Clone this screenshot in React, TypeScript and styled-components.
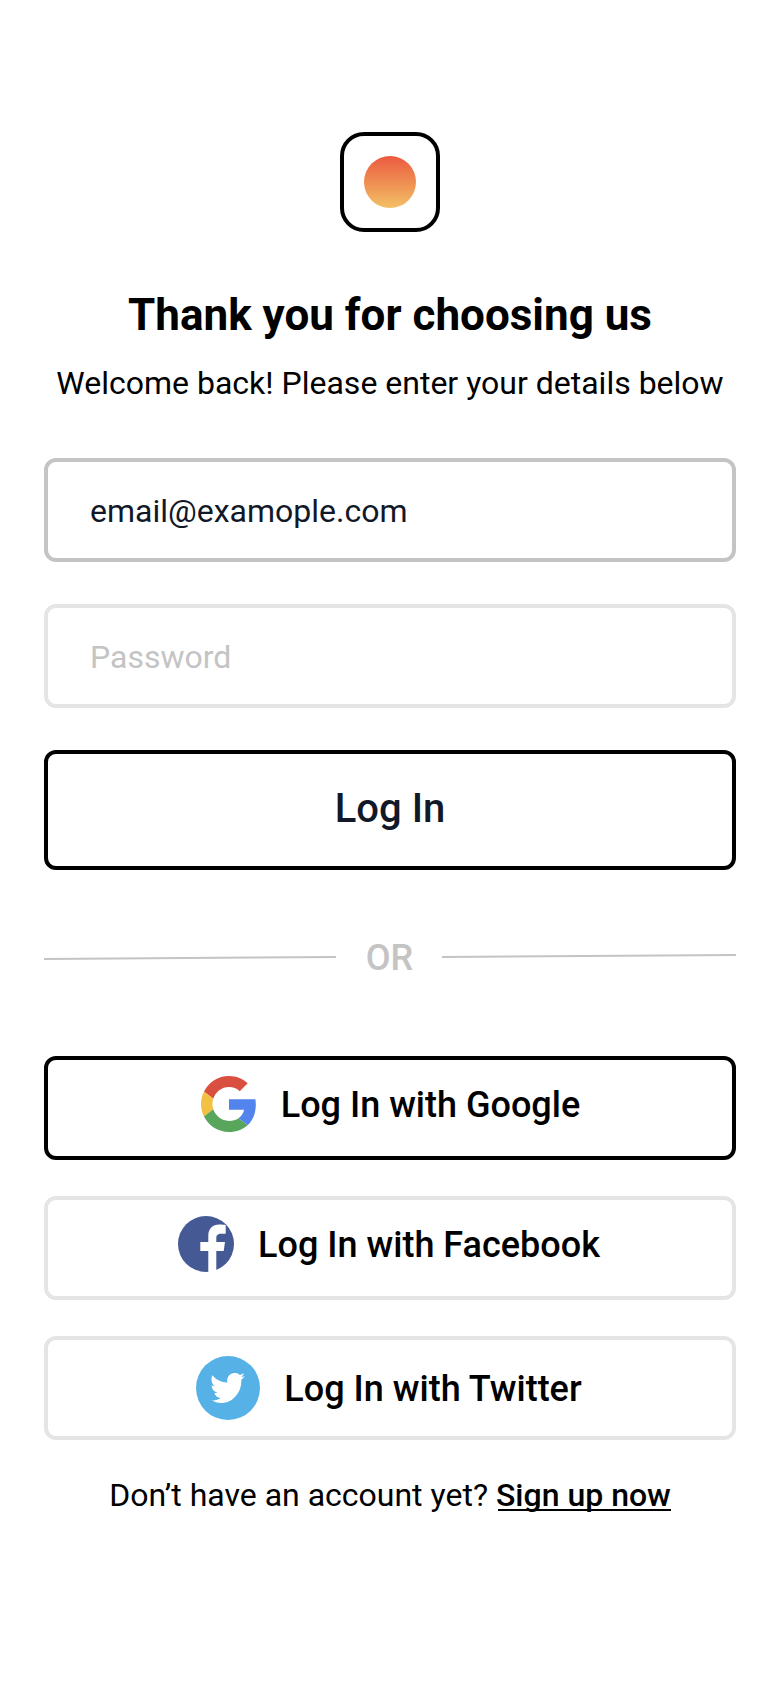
import React from "react";
import styled, { createGlobalStyle } from "styled-components";

const GlobalStyle = createGlobalStyle`
  * { box-sizing: border-box; }
  body {
    margin: 0;
    background: #fff;
    color: #000;
    font-family: Roboto, "Liberation Sans", sans-serif;
  }
`;

const Screen = styled.main`
  width: 780px;
  height: 1688px;
  padding: 132px 44px 0;
  display: flex;
  flex-direction: column;
  align-items: center;
  background: #fff;
`;

const Logo = styled.div`
  width: 100px;
  height: 100px;
  border: 4px solid #000;
  border-radius: 24px;
  padding: 20px;
`;

const Sun = styled.div`
  width: 52px;
  height: 52px;
  border-radius: 50%;
  background: linear-gradient(#eb5a3f, #f3c065);
`;

const Title = styled.h1`
  margin: 57px 0 0;
  font-size: 44px;
  line-height: 52px;
  font-weight: 700;
  white-space: nowrap;
`;

const Subtitle = styled.p`
  margin: 23px 0 0;
  font-size: 32px;
  line-height: 38px;
  white-space: nowrap;
`;

const Form = styled.form`
  width: 100%;
  margin-top: 56px;
  display: flex;
  flex-direction: column;
  gap: 42px;
`;

const Field = styled.input<{ $active?: boolean }>`
  width: 100%;
  height: 104px;
  padding: 2px 42px 0;
  border: 4px solid ${(p) => (p.$active ? "#c4c4c4" : "#e5e5e5")};
  border-radius: 12px;
  background: #fff;
  color: #111827;
  font: 400 32px/38px Roboto, "Liberation Sans", sans-serif;
  outline: none;

  &::placeholder {
    color: #c4c4c4;
    opacity: 1;
  }
`;

const LoginButton = styled.button`
  width: 100%;
  height: 120px;
  padding: 0 0 2px;
  border: 4px solid #000;
  border-radius: 12px;
  background: #fff;
  color: #111827;
  font: 500 40px/48px Roboto, "Liberation Sans", sans-serif;
`;

const Divider = styled.div`
  width: 100%;
  height: 42px;
  margin-top: 67px;
  display: grid;
  grid-template-columns: 292px 106px 294px;
  color: #c4c4c4;
  font-size: 36px;
  line-height: 42px;
  font-weight: 500;
  text-align: center;
`;

const DividerLabel = styled.span`
  padding-left: 1px;
`;

const Rule = styled.svg`
  display: block;
  width: 100%;
  height: 42px;
`;

const SocialList = styled.div`
  width: 100%;
  margin-top: 77px;
  display: flex;
  flex-direction: column;
  gap: 36px;
`;

const SocialButton = styled.button<{
  $primary?: boolean;
  $padding: string;
}>`
  width: 100%;
  height: 104px;
  padding: ${(p) => p.$padding};
  display: flex;
  align-items: center;
  justify-content: center;
  gap: 24px;
  border: 4px solid ${(p) => (p.$primary ? "#000" : "#e5e5e5")};
  border-radius: 12px;
  background: #fff;
  color: #000;
  font: 500 36px/42px Roboto, "Liberation Sans", sans-serif;
  white-space: nowrap;
`;

const SocialLabel = styled.span`
  padding-top: 2px;
`;

const Footer = styled.p`
  margin: 36px 0 0;
  font-size: 32px;
  line-height: 38px;
  white-space: nowrap;
`;

const SignUp = styled.a`
  color: #000;
  font-weight: 500;
  text-decoration: none;
  background: linear-gradient(#000, #000) no-repeat right bottom 3px / calc(100% - 2px) 2px;
`;

const GoogleIcon = () => (
  <svg width="56" height="56" viewBox="0 0 48 48">
    <path fill="#d95040" d="M24 9.5c3.54 0 6.71 1.22 9.21 3.6l6.85-6.85C35.9 2.38 30.47 0 24 0 14.62 0 6.51 5.38 2.56 13.22l7.98 6.19C12.43 13.72 17.74 9.5 24 9.5z" />
    <path fill="#5383ec" d="M46.98 24.55c0-1.57-.15-3.09-.38-4.55H24v9.02h12.94c-.58 2.96-2.26 5.48-4.78 7.18l7.73 6c4.51-4.18 7.09-10.36 7.09-17.65z" />
    <path fill="#f2c042" d="M10.53 28.59c-.48-1.45-.76-2.99-.76-4.59s.27-3.14.76-4.59l-7.98-6.19C.92 16.46 0 20.12 0 24c0 3.88.92 7.54 2.56 10.78l7.97-6.19z" />
    <path fill="#58a55c" d="M24 48c6.48 0 11.93-2.13 15.89-5.81l-7.73-6c-2.15 1.45-4.92 2.3-8.16 2.3-6.26 0-11.57-4.22-13.47-9.91l-7.98 6.19C6.51 42.62 14.62 48 24 48z" />
  </svg>
);

const FacebookIcon = () => (
  <svg width="56" height="56" viewBox="0 0 56 56">
    <circle cx="28" cy="28" r="28" fill="#455a94" />
    <path fill="#fff" d="M30.3 57V35h-8v-9h8v-6c0-7.2 4.2-11.4 11-11.4 3 0 5.4.2 6.4.4v8.7h-4.4c-3.8 0-5 1.7-5 4.5V26H47l-1.3 9h-7.4v22z" />
  </svg>
);

const TwitterIcon = () => (
  <svg width="64" height="64" viewBox="0 0 192 192">
    <circle cx="96" cy="96" r="96" fill="#56b2e6" />
    <path
      fill="#fff"
      d="M49 58C60 71 76 79 94 80C91 64 101 51 116 51C122 51 127 53 131 57C136 56 140 54 144 52C142 57 139 60 136 63C139 63 143 62 146 60C143 65 140 68 136 71C138 108 111 141 75 141C65 141 55 138 47 133C57 134 67 131 74 126C64 125 57 119 55 110C58 111 61 111 64 110C53 107 47 98 47 88C50 90 53 91 56 91C47 84 44 70 49 58Z"
    />
  </svg>
);

export default function App() {
  return (
    <>
      <GlobalStyle />
      <Screen>
        <Logo>
          <Sun />
        </Logo>
        <Title>Thank you for choosing us</Title>
        <Subtitle>Welcome back! Please enter your details below</Subtitle>
        <Form>
          <Field type="text" $active defaultValue="email@examople.com" />
          <Field type="password" placeholder="Password" />
          <LoginButton type="button">Log In</LoginButton>
        </Form>
        <Divider>
          <Rule viewBox="0 0 292 42">
            <path d="M0 22 292 20" stroke="#c4c4c4" strokeWidth="2" />
          </Rule>
          <DividerLabel>OR</DividerLabel>
          <Rule viewBox="0 0 294 42">
            <path d="M0 20 294 18" stroke="#c4c4c4" strokeWidth="2" />
          </Rule>
        </Divider>
        <SocialList>
          <SocialButton type="button" $primary $padding="0 0 8px 1px">
            <GoogleIcon />
            <SocialLabel>Log In with Google</SocialLabel>
          </SocialButton>
          <SocialButton type="button" $padding="0 2px 8px 0">
            <FacebookIcon />
            <SocialLabel>Log In with Facebook</SocialLabel>
          </SocialButton>
          <SocialButton type="button" $padding="0 2px 0 0">
            <TwitterIcon />
            <SocialLabel>Log In with Twitter</SocialLabel>
          </SocialButton>
        </SocialList>
        <Footer>
          Don’t have an account yet? <SignUp>Sign up now</SignUp>
        </Footer>
      </Screen>
    </>
  );
}
